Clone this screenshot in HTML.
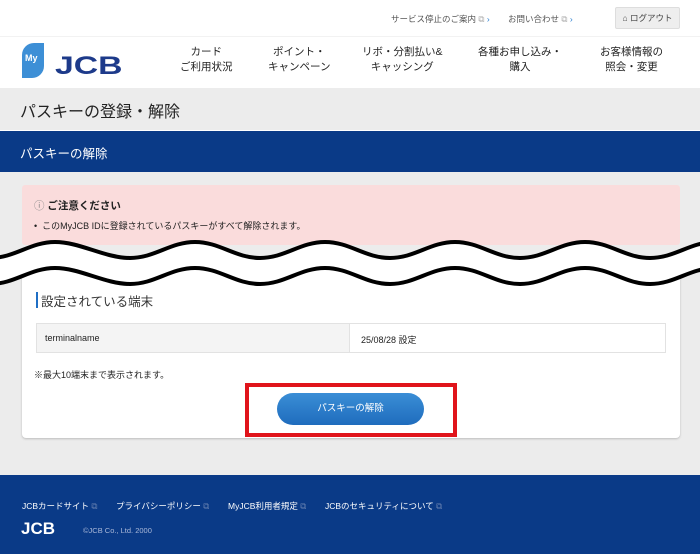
<!DOCTYPE html>
<html><head><meta charset="utf-8"><style>
*{margin:0;padding:0;box-sizing:border-box}
body{width:700px;height:554px;overflow:hidden;background:#ececec;font-family:"Liberation Sans","Noto Sans CJK JP",sans-serif;color:#222;position:relative}
.a{position:absolute;white-space:nowrap}
.top{left:0;top:0;width:700px;height:88px;background:#fff}
.tl{font-size:8.5px;color:#555;top:13px}
.nav{font-size:10.5px;color:#222;text-align:center;line-height:15px;top:45px}
</style></head><body>
<div class="a top"></div>
<div class="a" style="left:0;top:36px;width:700px;height:1px;background:#f2f2f2"></div>
<div class="a tl" style="left:391px">サービス停止のご案内 <span style="color:#aaa">⧉</span> <span style="color:#2a7fd0">›</span></div>
<div class="a tl" style="left:508px">お問い合わせ <span style="color:#aaa">⧉</span> <span style="color:#2a7fd0">›</span></div>
<div class="a" style="left:615px;top:7px;width:65px;height:22px;background:#eee;border:1px solid #ddd;border-radius:2px;font-size:8.5px;color:#444;line-height:20px;text-align:center">⌂ ログアウト</div>
<div class="a" style="left:22px;top:43px;width:22px;height:35px;background:#3d8fd6;border-radius:12px 0 12px 0"></div>
<div class="a" style="left:25px;top:53px;font-size:9px;color:#fff;font-weight:bold">My</div>
<div class="a" style="left:55px;top:53px;font-size:25px;font-weight:bold;color:#1d3a8a;line-height:26px;transform:scaleX(1.35);transform-origin:left">JCB</div>
<div class="a nav" style="left:180px">カード<br>ご利用状況</div>
<div class="a nav" style="left:268px">ポイント・<br>キャンペーン</div>
<div class="a nav" style="left:362px">リボ・分割払い&amp;<br>キャッシング</div>
<div class="a nav" style="left:478px">各種お申し込み・<br>購入</div>
<div class="a nav" style="left:600px">お客様情報の<br>照会・変更</div>
<div class="a" style="left:20px;top:98px;font-size:16px">パスキーの登録・解除</div>
<div class="a" style="left:0;top:130px;width:700px;height:1px;background:#fff"></div>
<div class="a" style="left:0;top:131px;width:700px;height:41px;background:#0a3a87;color:#fff;font-size:12.5px;padding:12px 0 0 20px">パスキーの解除</div>
<div class="a" style="left:22px;top:185px;width:658px;height:60px;background:#fadcdc;border-radius:3px"></div>
<div class="a" style="left:34px;top:198px;font-size:10.5px;font-weight:bold"><span style="font-weight:normal;color:#888">ⓘ</span> ご注意ください</div>
<div class="a" style="left:34px;top:219px;font-size:9px">•&nbsp; このMyJCB IDに登録されているパスキーがすべて解除されます。</div>
<div class="a" style="left:22px;top:270px;width:658px;height:168px;background:#fff;border-radius:4px;box-shadow:0 1px 2px #bbb"></div>
<svg class="a" style="left:0;top:232px" width="700" height="64" viewBox="0 0 700 64">
<path d="M-10,26 C15,26 30,10 55,10 C80,10 105,26 130,26 C155,26 170,10 195,10 C220,10 235,26 260,26 C285,26 300,10 325,10 C350,10 365,26 390,26 C415,26 430,10 455,10 C480,10 495,26 520,26 C545,26 560,10 585,10 C610,10 625,26 650,26 C675,26 690,10 715,10 L715,36 C690,36 675,52 650,52 C625,52 610,36 585,36 C560,36 545,52 520,52 C495,52 480,36 455,36 C430,36 415,52 390,52 C365,52 350,36 325,36 C300,36 285,52 260,52 C235,52 220,36 195,36 C170,36 155,52 130,52 C105,52 80,36 55,36 C30,36 15,52 -10,52 Z" fill="#fff"/>
<path d="M-10,26 C15,26 30,10 55,10 C80,10 105,26 130,26 C155,26 170,10 195,10 C220,10 235,26 260,26 C285,26 300,10 325,10 C350,10 365,26 390,26 C415,26 430,10 455,10 C480,10 495,26 520,26 C545,26 560,10 585,10 C610,10 625,26 650,26 C675,26 690,10 715,10" fill="none" stroke="#000" stroke-width="4"/>
<path d="M-10,52 C15,52 30,36 55,36 C80,36 105,52 130,52 C155,52 170,36 195,36 C220,36 235,52 260,52 C285,52 300,36 325,36 C350,36 365,52 390,52 C415,52 430,36 455,36 C480,36 495,52 520,52 C545,52 560,36 585,36 C610,36 625,52 650,52 C675,52 690,36 715,36" fill="none" stroke="#000" stroke-width="4"/>
</svg>
<div class="a" style="left:36px;top:292px;width:2px;height:16px;background:#1f6fc5"></div>
<div class="a" style="left:41px;top:291px;font-size:12.5px;color:#333">設定されている端末</div>
<div class="a" style="left:36px;top:323px;width:630px;height:30px;border:1px solid #e2e2e2;background:#fff"></div>
<div class="a" style="left:37px;top:324px;width:313px;height:28px;background:#f4f4f4;border-right:1px solid #e2e2e2"></div>
<div class="a" style="left:45px;top:333px;font-size:9px">terminalname</div>
<div class="a" style="left:361px;top:333px;font-size:9px">25/08/28 設定</div>
<div class="a" style="left:34px;top:368px;font-size:9px">※最大10端末まで表示されます。</div>
<div class="a" style="left:245px;top:383px;width:212px;height:54px;border:4px solid #e0141b"></div>
<div class="a" style="left:277px;top:393px;width:147px;height:32px;border-radius:16px;background:linear-gradient(#3a8ed6,#1f6cbd);color:#fff;font-size:9.5px;text-align:center;line-height:32px">パスキーの解除</div>
<div class="a" style="left:0;top:475px;width:700px;height:79px;background:#0a3a87"></div>
<div class="a" style="left:22px;top:500px;font-size:8.5px;color:#fff">JCBカードサイト <span style="color:#6680b0">⧉</span></div>
<div class="a" style="left:116px;top:500px;font-size:8.5px;color:#fff">プライバシーポリシー <span style="color:#6680b0">⧉</span></div>
<div class="a" style="left:228px;top:500px;font-size:8.5px;color:#fff">MyJCB利用者規定 <span style="color:#6680b0">⧉</span></div>
<div class="a" style="left:325px;top:500px;font-size:8.5px;color:#fff">JCBのセキュリティについて <span style="color:#6680b0">⧉</span></div>
<div class="a" style="left:21px;top:519px;font-size:17px;font-weight:bold;color:#fff">JCB</div>
<div class="a" style="left:83px;top:526px;font-size:7.5px;color:#aab8d8">©JCB Co., Ltd. 2000</div>
</body></html>
